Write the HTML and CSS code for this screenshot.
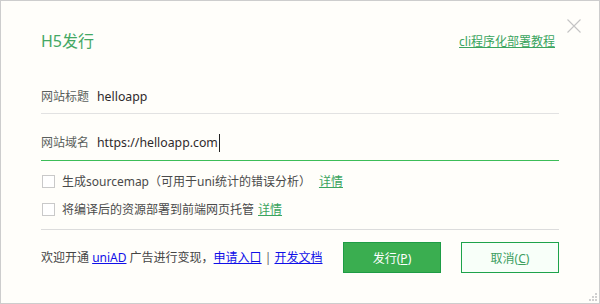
FILE: index.html
```html
<!DOCTYPE html>
<html lang="zh-CN">
<head>
<meta charset="utf-8">
<title>H5发行</title>
<link rel="stylesheet" href="styles.css">
</head>
<body>
<div class="window">
  <svg class="close" width="14" height="14" viewBox="0 0 14 14"><path d="M0.5 0.5 L13.5 13.5 M13.5 0.5 L0.5 13.5" stroke="#c4c4c4" stroke-width="1.1" fill="none"/></svg>
  <div class="header">
    <div class="title">H5发行</div>
    <a class="cli-link" href="#">cli程序化部署教程</a>
  </div>
  <div class="field field-title">
    <span class="label">网站标题</span><span class="value">helloapp</span>
  </div>
  <div class="field field-domain">
    <span class="label">网站域名</span><span class="value">https://helloapp.com</span><span class="caret"></span>
  </div>
  <div class="options">
    <div class="option"><span class="check"></span><span class="opt-text">生成sourcemap（可用于uni统计的错误分析）</span><a class="detail detail-wide" href="#">详情</a></div>
    <div class="option"><span class="check"></span><span class="opt-text">将编译后的资源部署到前端网页托管</span><a class="detail" href="#">详情</a></div>
  </div>
  <div class="footer">
    <div class="promo">欢迎开通 <a class="blue" href="#">uniAD</a> 广告进行变现，<a class="blue" href="#">申请入口</a><span class="sep"> | </span><a class="blue" href="#">开发文档</a></div>
    <div class="buttons">
      <button class="btn btn-primary">发行(<u>P</u>)</button>
      <button class="btn btn-cancel">取消(<u>C</u>)</button>
    </div>
  </div>
  <svg class="grip" width="10" height="10" viewBox="0 0 10 10">
    <rect x="7" y="1" width="2" height="2" fill="#d0d0d0"/>
    <rect x="4" y="4" width="2" height="2" fill="#d0d0d0"/>
    <rect x="7" y="4" width="2" height="2" fill="#d0d0d0"/>
    <rect x="1" y="7" width="2" height="2" fill="#d0d0d0"/>
    <rect x="4" y="7" width="2" height="2" fill="#d0d0d0"/>
    <rect x="7" y="7" width="2" height="2" fill="#d0d0d0"/>
  </svg>
</div>
</body>
</html>
```
FILE: styles.css
```css
* { box-sizing: border-box; }
html, body { margin: 0; padding: 0; }
body {
  font-family: "Noto Sans", "Noto Sans CJK SC", sans-serif;
  font-size: 12px;
  color: #333;
}
.window {
  position: relative;
  width: 600px;
  height: 304px;
  border: 1px solid #cdcdcd;
  background: #fffefa;
  padding: 29px 40px 0 40px;
}
.close {
  position: absolute;
  left: 566px;
  top: 18px;
}
.grip {
  position: absolute;
  right: 1px;
  bottom: 1px;
}
.header {
  height: 23px;
  display: flex;
  align-items: center;
  justify-content: space-between;
}
.title {
  font-size: 16px;
  color: #44a864;
  line-height: 23px;
}
.cli-link {
  color: #3aa45e;
  text-decoration: underline;
  line-height: 20px;
  margin-right: 4px;
}
.field {
  display: flex;
  align-items: center;
  line-height: 20px;
}
.field-title {
  margin-top: 34px;
  padding-bottom: 6px;
  border-bottom: 1px solid #e2e2e2;
}
.field-domain {
  padding-top: 19px;
  padding-bottom: 7px;
  border-bottom: 1px solid #3cbd58;
}
.label {
  color: #5a5f5c;
  width: 56px;
}
.value {
  color: #2f2a2c;
  font-size: 12.3px;
}
.caret {
  display: inline-block;
  width: 1px;
  height: 18px;
  background: #222;
  margin-left: 1px;
}
.options {
  padding: 6px 0;
  border-bottom: 1px solid #dcdcdc;
}
.option {
  height: 28px;
  display: flex;
  align-items: center;
}
.check {
  width: 13px;
  height: 13px;
  border: 1px solid #c9c9c9;
  background: #fff;
  margin-left: 1px;
  margin-right: 7px;
}
.opt-text { color: #4a4a4a; }
.detail {
  color: #3aa45e;
  text-decoration: underline;
  margin-left: 4px;
}
.detail-wide { margin-left: 8px; }
.footer {
  display: flex;
  align-items: flex-start;
  padding-top: 12px;
}
.promo {
  color: #444;
  line-height: 31px;
}
.blue { color: #1010e8; text-decoration: underline; }
.sep { color: #666; }
.buttons {
  margin-left: auto;
  display: flex;
  gap: 20px;
}
.btn {
  width: 98px;
  height: 31px;
  font-family: inherit;
  font-size: 12px;
  padding: 0;
  cursor: pointer;
}
.btn u { text-decoration: underline; }
.btn-primary {
  background: #3aae50;
  border: 1px solid #1e9c45;
  color: #fff;
}
.btn-cancel {
  background: #f8fff9;
  border: 1px solid #1ea34b;
  color: #3d9e60;
}
```
